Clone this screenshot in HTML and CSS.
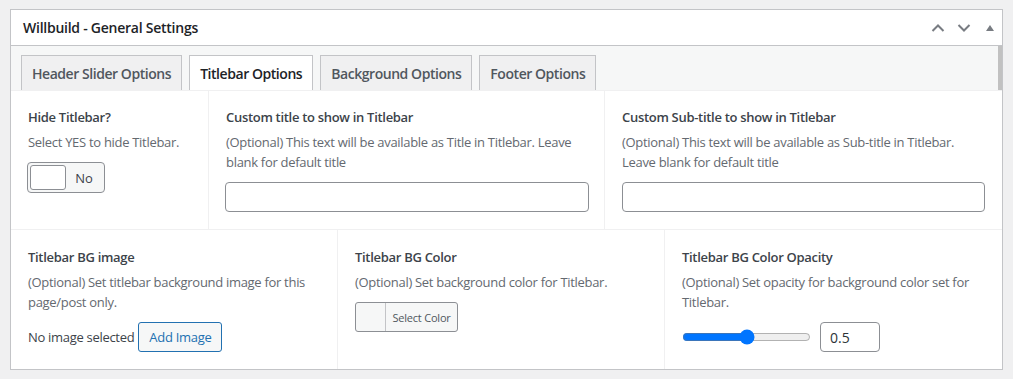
FILE: index.html
```html
<!DOCTYPE html>
<html lang="en">
<head>
<meta charset="utf-8">
<title>Willbuild - General Settings</title>
<link rel="stylesheet" href="styles.css">
</head>
<body>
<div class="postbox">
  <div class="postbox-header">
    <h2 class="hndle">Willbuild - General Settings</h2>
    <div class="handle-actions">
      <span class="handle-btn">
        <svg width="14" height="10" viewBox="0 0 14 10"><path d="M1.5 8 L7 2.5 L12.5 8" fill="none" stroke="#787c82" stroke-width="2"/></svg>
      </span>
      <span class="handle-btn">
        <svg width="14" height="10" viewBox="0 0 14 10"><path d="M1.5 2 L7 7.5 L12.5 2" fill="none" stroke="#787c82" stroke-width="2"/></svg>
      </span>
      <span class="handle-btn toggle">
        <svg width="10" height="8" viewBox="0 0 10 8"><path d="M5 1 L9 7 L1 7 Z" fill="#787c82"/></svg>
      </span>
    </div>
  </div>
  <div class="inside">
    <div class="tab-nav">
      <span class="nav-tab">Header Slider Options</span>
      <span class="nav-tab active">Titlebar Options</span>
      <span class="nav-tab">Background Options</span>
      <span class="nav-tab">Footer Options</span>
      <span class="scroll-thumb"></span>
    </div>
    <div class="fields row-one">
      <div class="field">
        <div class="field-label">Hide Titlebar?</div>
        <div class="field-desc">Select YES to hide Titlebar.</div>
        <div class="switch">
          <span class="switch-knob"></span>
          <span class="switch-text">No</span>
        </div>
      </div>
      <div class="field">
        <div class="field-label">Custom title to show in Titlebar</div>
        <div class="field-desc">(Optional) This text will be available as Title in Titlebar. Leave blank for default title</div>
        <input class="text-input" type="text">
      </div>
      <div class="field last">
        <div class="field-label">Custom Sub-title to show in Titlebar</div>
        <div class="field-desc">(Optional) This text will be available as Sub-title in Titlebar. Leave blank for default title</div>
        <input class="text-input" type="text">
      </div>
    </div>
    <div class="fields row-two">
      <div class="field">
        <div class="field-label">Titlebar BG image</div>
        <div class="field-desc">(Optional) Set titlebar background image for this page/post only.</div>
        <div class="image-row">
          <span class="no-image">No image selected</span>
          <button class="add-image" type="button">Add Image</button>
        </div>
      </div>
      <div class="field">
        <div class="field-label">Titlebar BG Color</div>
        <div class="field-desc">(Optional) Set background color for Titlebar.</div>
        <button class="color-btn" type="button"><span class="swatch"></span><span class="color-text">Select Color</span></button>
      </div>
      <div class="field last">
        <div class="field-label">Titlebar BG Color Opacity</div>
        <div class="field-desc">(Optional) Set opacity for background color set for Titlebar.</div>
        <div class="opacity-row">
          <input class="range" type="range" min="0" max="1" step="0.1" value="0.5">
          <input class="num-input" type="text" value="0.5">
        </div>
      </div>
    </div>
  </div>
</div>
</body>
</html>
```

FILE: styles.css
```css
* { box-sizing: border-box; }
html, body { margin: 0; }
body {
  background: #f0f0f1;
  padding: 9px 0 0 10px;
  font-family: "Open Sans", "Noto Sans", sans-serif;
  color: #3c434a;
}
.postbox {
  width: 993px;
  border: 1px solid #c3c4c7;
  background: #fff;
}
.postbox-header {
  height: 36px;
  border-bottom: 1px solid #c3c4c7;
  display: flex;
  align-items: center;
  justify-content: space-between;
  padding: 0 0 0 12px;
}
.hndle {
  margin: 0;
  font-size: 14px;
  font-weight: 600;
  color: #1d2327;
  letter-spacing: -0.25px;
}
.handle-actions { display: flex; align-items: center; }
.handle-btn { display: flex; width: 26px; justify-content: center; }
.handle-btn.toggle { width: 25px; }
.inside { display: flex; flex-direction: column; }
.tab-nav {
  display: flex;
  align-items: flex-end;
  background: #f6f7f7;
  padding-left: 10px;
  height: 45px;
  gap: 7px;
  border-bottom: 1px solid #f0f0f1;
}
.nav-tab {
  height: 35px;
  padding: 0 10px;
  display: flex;
  align-items: center;
  font-size: 14px;
  font-weight: 600;
  color: #50575e;
  background: #f0f0f1;
  border: 1px solid #c3c4c7;
  border-bottom: none;
  letter-spacing: -0.45px;
}
.nav-tab.active {
  background: #fff;
  color: #1d2327;
}
.scroll-thumb {
  margin-left: auto;
  align-self: stretch;
  width: 4px;
  background: #c1c1c1;
}
.fields { display: grid; }
.row-one { grid-template-columns: 198px 396px 1fr; }
.row-two {
  grid-template-columns: 327px 327px 327px;
  border-top: 1px solid #f0f0f1;
}
.field {
  padding: 16px 17px 17px;
  border-right: 1px solid #f0f0f1;
}
.row-two .field { padding-top: 17px; padding-bottom: 17px; }
.field.last { border-right: none; }
.field-label {
  font-size: 13px;
  font-weight: 600;
  line-height: 20px;
  color: #3c434a;
  letter-spacing: -0.3px;
}
.field-desc {
  margin-top: 5px;
  font-size: 13px;
  line-height: 20px;
  color: #646970;
  letter-spacing: -0.3px;
}
.switch {
  margin-top: 10px;
  width: 78px;
  height: 31px;
  border: 1px solid #8c8f94;
  border-radius: 4px;
  background: #f6f7f7;
  display: flex;
  align-items: center;
  padding: 2px;
  margin-left: -1px;
}
.switch-knob {
  width: 36px;
  height: 25px;
  background: #fff;
  border: 1px solid #8c8f94;
  border-radius: 3px;
}
.switch-text {
  flex: 1;
  text-align: center;
  font-size: 13px;
  color: #3c434a;
}
.text-input {
  display: block;
  margin-top: 10px;
  margin-left: -1px;
  width: calc(100% + 3px);
  height: 30px;
  border: 1px solid #8c8f94;
  border-radius: 4px;
  background: #fff;
}
.row-one .field.last .text-input { width: 363px; margin-left: 0; }
.image-row {
  margin-top: 10px;
  display: flex;
  align-items: center;
  gap: 4px;
}
.no-image { font-size: 13px; color: #3c434a; letter-spacing: -0.3px; }
.add-image {
  height: 30px;
  padding: 0 10px;
  font-family: inherit;
  font-size: 13px;
  color: #2271b1;
  background: #f6f7f7;
  border: 1px solid #2271b1;
  border-radius: 3px;
  letter-spacing: -0.3px;
}
.color-btn {
  margin-top: 10px;
  display: flex;
  align-items: stretch;
  height: 30px;
  width: 103px;
  padding: 0;
  background: #f6f7f7;
  border: 1px solid #8c8f94;
  border-radius: 3px;
  font-family: inherit;
}
.swatch { width: 30px; border-right: 1px solid #c3c4c7; }
.color-text {
  flex: 1;
  display: flex;
  align-items: center;
  justify-content: center;
  font-size: 11px;
  color: #50575e;
  letter-spacing: -0.2px;
}
.opacity-row {
  margin-top: 10px;
  display: flex;
  align-items: center;
  gap: 9px;
}
.range { width: 129px; margin: 0; }
.num-input {
  width: 60px;
  height: 30px;
  border: 1px solid #8c8f94;
  border-radius: 4px;
  padding: 0 9px;
  font-family: inherit;
  font-size: 14px;
  color: #2c3338;
}
```
